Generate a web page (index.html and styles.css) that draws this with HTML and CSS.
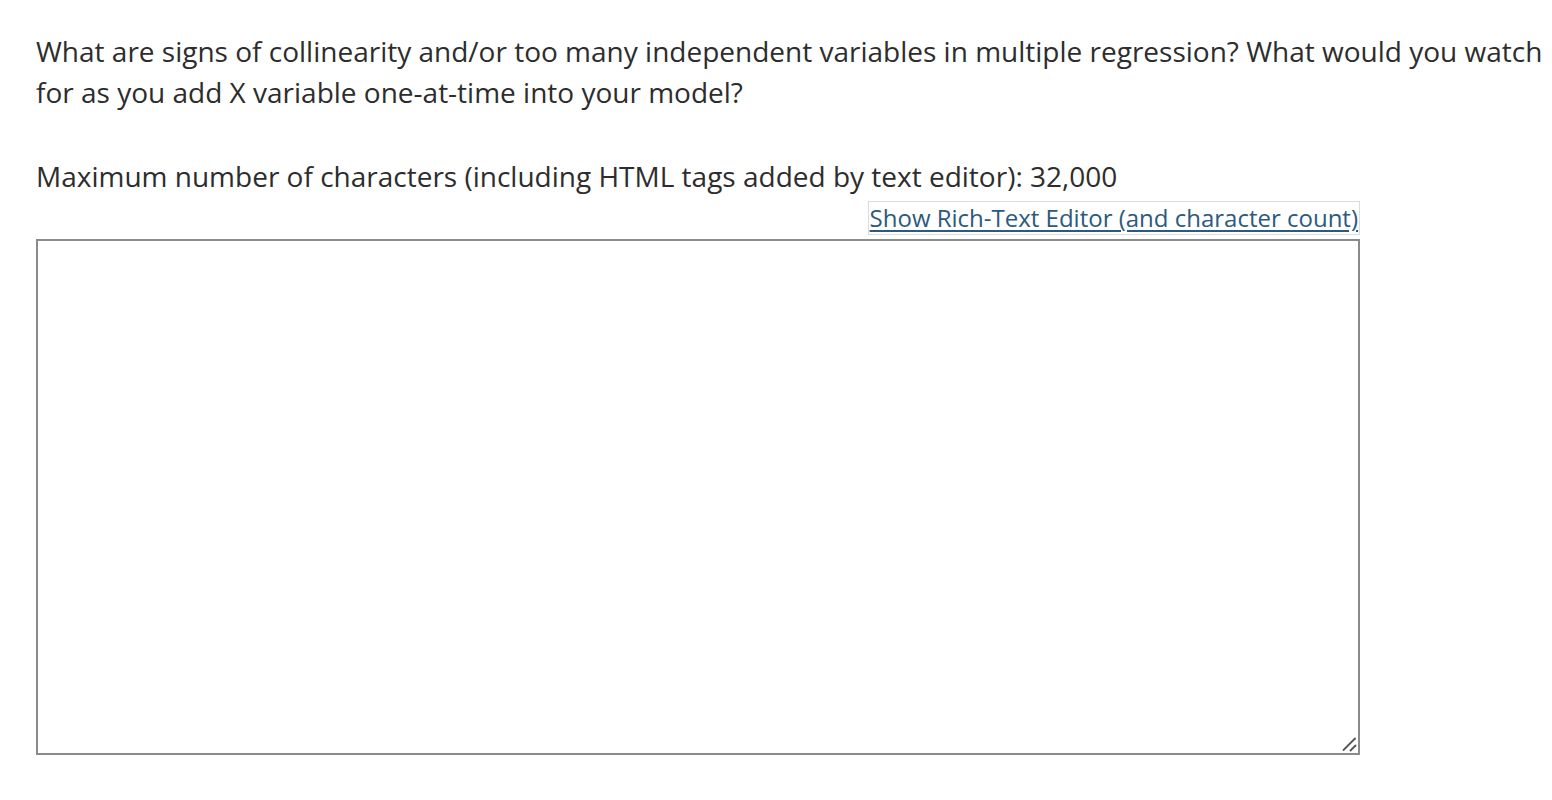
FILE: index.html
```html
<!DOCTYPE html>
<html>
<head>
<meta charset="utf-8">
<link rel="stylesheet" href="styles.css">
</head>
<body>
<div class="page">
  <p class="question">What are signs of collinearity and/or too many independent variables in multiple regression? What would you watch for as you add X variable one-at-time into your model?</p>
  <p class="limit">Maximum number of characters (including HTML tags added by text editor): 32,000</p>
  <div class="editor">
    <div class="toggle-row"><a class="toggle" href="#">Show Rich-Text Editor (and character count)</a></div>
    <div class="answer-wrap">
      <textarea class="answer"></textarea>
      <svg class="grip" width="16" height="16" viewBox="0 0 16 16" aria-hidden="true">
        <line x1="2.5" y1="14" x2="14" y2="2.5" stroke="#555" stroke-width="1.8" stroke-linecap="round"/>
        <line x1="9.5" y1="14.5" x2="14.5" y2="9.5" stroke="#555" stroke-width="1.8" stroke-linecap="round"/>
      </svg>
    </div>
  </div>
</div>
</body>
</html>
```
FILE: styles.css
```css
html, body {
  margin: 0;
  padding: 0;
  background: #fff;
}
body {
  font-family: "Open Sans", "Liberation Sans", sans-serif;
  color: #2d2d2d;
}
.page {
  padding: 31px 0 0 36px;
  width: 1512px;
}
.question {
  margin: 0;
  font-size: 28px;
  line-height: 41px;
}
.limit {
  margin: 43px 0 0 0;
  font-size: 28px;
  line-height: 41px;
}
.editor {
  width: 1324px;
  margin-top: 4px;
}
.toggle-row {
  display: flex;
  justify-content: flex-end;
}
.toggle {
  display: block;
  border: 1px solid #dcdcdc;
  padding: 0 1px;
  font-size: 24px;
  line-height: 32px;
  color: #2b5a7e;
  text-decoration: underline;
  text-underline-offset: 3px;
}
.answer-wrap {
  position: relative;
  margin-top: 4px;
}
.answer {
  display: block;
  box-sizing: border-box;
  width: 1324px;
  height: 516px;
  margin: 0;
  border: 2px solid #8a8a8a;
  padding: 0;
  background: #fff;
  resize: none;
}
.grip {
  position: absolute;
  right: 3px;
  bottom: 3px;
}
```
